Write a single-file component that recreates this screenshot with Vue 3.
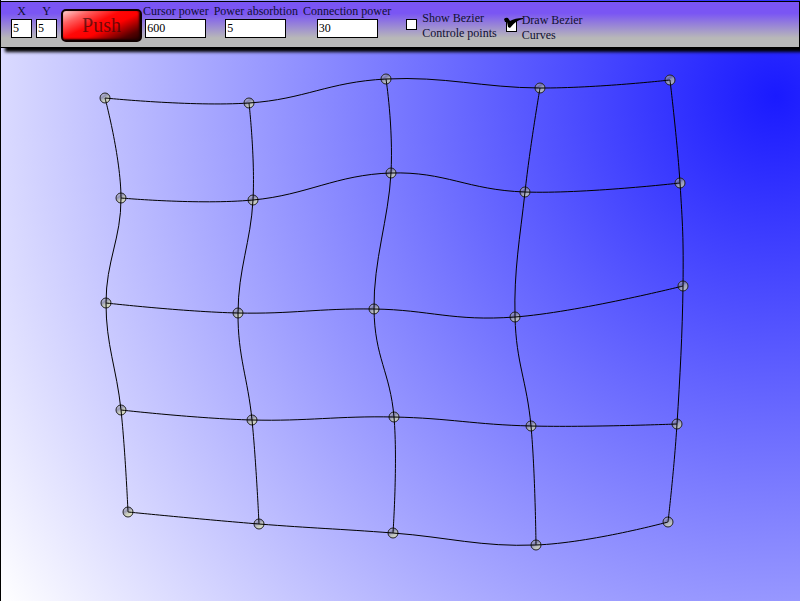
<script setup>
import { computed, ref } from 'vue'

const sizeX = ref('5')
const sizeY = ref('5')
const cursorPower = ref('600')
const absorption = ref('5')
const connectionPower = ref('30')
const showControls = ref(false)
const drawCurves = ref(true)

const nodes = [
  [[105, 98], [249, 103], [386, 79], [540, 88], [670, 80]],
  [[121, 198], [253, 200], [391, 173], [525, 192], [680, 183]],
  [[106, 303], [238, 313], [374, 309], [515, 317], [683, 286]],
  [[121, 410], [252, 420], [394, 417], [531, 426], [677, 424]],
  [[128, 512], [259, 524], [393, 533], [536, 545], [668, 522]],
]

const points = nodes.flat()
const columns = nodes[0].map((_, i) => nodes.map((row) => row[i]))
const tension = 0.2

// Control points on either side of a node follow the line between its neighbours.
function controls(line) {
  return line.slice(1).map((end, i) => {
    const start = line[i]
    const before = line[i - 1]
    const after = line[i + 2]
    const a = before
      ? [start[0] + (end[0] - before[0]) * tension, start[1] + (end[1] - before[1]) * tension]
      : start
    const b = after
      ? [end[0] - (after[0] - start[0]) * tension, end[1] - (after[1] - start[1]) * tension]
      : end
    return { a, b, end }
  })
}

function toPath(line) {
  const start = `M${line[0]}`
  if (!drawCurves.value) return start + line.slice(1).map((p) => `L${p}`).join('')
  return start + controls(line).map(({ a, b, end }) => `C${a} ${b} ${end}`).join('')
}

const lines = [...nodes, ...columns]
const paths = computed(() => lines.map(toPath))
const handles = computed(() =>
  showControls.value ? lines.flatMap((l) => controls(l).flatMap(({ a, b }) => [a, b])) : []
)
</script>

<template>
  <div class="app">
    <form class="toolbar" @submit.prevent>
      <div class="group">
        <label class="field tiny"><span>X</span><input v-model="sizeX" type="text" /></label>
        <label class="field tiny"><span>Y</span><input v-model="sizeY" type="text" /></label>
        <button class="push" type="submit"><span>Push</span></button>
      </div>
      <div class="group powers">
        <label class="field"><span>Cursor power</span><input v-model="cursorPower" type="text" /></label>
        <label class="field"><span>Power absorbtion</span><input v-model="absorption" type="text" /></label>
        <label class="field"><span>Connection power</span><input v-model="connectionPower" type="text" /></label>
      </div>
      <div class="group toggles">
        <label class="toggle">
          <span class="box">
            <input v-model="showControls" type="checkbox" />
            <svg v-if="showControls" class="tick" viewBox="0 0 20 14"><path d="M0 2 Q2 0 4 1 L6 4 Q11 1 19 1 L19 2 Q12 3 6 11 L4 10 L3 5 L1 5 Z" /></svg>
          </span>
          <span>Show Bezier<br />Controle points</span>
        </label>
        <label class="toggle second">
          <span class="box">
            <input v-model="drawCurves" type="checkbox" />
            <svg v-if="drawCurves" class="tick" viewBox="0 0 20 14"><path d="M0 2 Q2 0 4 1 L6 4 Q11 1 19 1 L19 2 Q12 3 6 11 L4 10 L3 5 L1 5 Z" /></svg>
          </span>
          <span>Draw Bezier<br />Curves</span>
        </label>
      </div>
    </form>
    <svg class="mesh">
      <defs>
        <linearGradient id="ball" x1="0" y1="0" x2="0.7" y2="1">
          <stop offset="0" stop-color="#ffffff" stop-opacity="0.6" />
          <stop offset="0.4" stop-color="#77778c" stop-opacity="0.65" />
          <stop offset="0.6" stop-color="#b8bca0" stop-opacity="0.7" />
          <stop offset="1" stop-color="#f0f8a8" stop-opacity="0.65" />
        </linearGradient>
      </defs>
      <circle v-for="(p, i) in points" :key="i" class="node" :cx="p[0]" :cy="p[1]" r="5" />
      <path v-for="(d, i) in paths" :key="i" class="line" :d="d" />
      <circle v-for="(p, i) in handles" :key="i" class="handle" :cx="p[0]" :cy="p[1]" r="2" />
    </svg>
  </div>
</template>

<style>
body {
  margin: 0;
}
</style>

<style scoped>
.app {
  box-sizing: border-box;
  display: grid;
  min-height: 100vh;
  grid-template-rows: auto 1fr;
  border-left: 1px solid #000;
  background: radial-gradient(circle farthest-corner at 97% 16%, #1a1aff, #fff);
  font: 12px/15px "Liberation Serif", serif;
  color: #101030;
}

.toolbar {
  z-index: 1;
  grid-area: 1 / 1;
  display: flex;
  align-items: flex-start;
  gap: 1px;
  height: 45px;
  margin-top: 1px;
  padding-left: 10px;
  border: 1px solid #000;
  border-left: 0;
  background: linear-gradient(#7a55f4 25%, #b8b8b8 80%);
  box-shadow: 4px 4px 3px #000;
}

.group {
  display: flex;
  gap: 4px;
}

.powers {
  gap: 5px;
}

.field {
  display: flex;
  flex-direction: column;
  align-items: center;
  padding-top: 2px;
}

.field input {
  box-sizing: border-box;
  width: 61px;
  height: 19px;
  padding: 0 1px;
  border: 1px solid #000;
  border-radius: 0;
  background: #fff;
  color: #000;
  font: inherit;
}

.tiny input {
  width: 21px;
}

.push {
  width: 81px;
  height: 33px;
  margin-top: 7px;
  padding: 0;
  border: 2px solid #100000;
  border-radius: 5px;
  background: linear-gradient(155deg, #ffd0d0, #ff6060 20%, #ff0808 42%, #f00 58%, #500 85%, #200);
  box-shadow: inset -1px -1px 2px #200;
  color: rgba(50, 10, 10, 0.7);
  font: 20px/29px "Liberation Serif", serif;
}

.toggles {
  gap: 9px;
  padding-left: 14px;
}

.toggle {
  display: flex;
  gap: 5px;
  padding-top: 9px;
}

.second {
  padding-top: 11px;
}

.box {
  position: relative;
  height: 11px;
  margin-top: 8px;
}

.box input {
  appearance: none;
  display: block;
  box-sizing: border-box;
  width: 11px;
  height: 11px;
  margin: 0;
  border: 1px solid #000;
  background: #fff;
}

.tick {
  position: absolute;
  left: -2px;
  top: -4px;
  width: 20px;
  height: 14px;
}

.mesh {
  grid-area: 1 / 1 / 3 / 2;
  width: 100%;
  height: 100%;
  margin-left: -1px;
}

.node {
  fill: url(#ball);
  stroke: #222;
}

.line {
  fill: none;
  stroke: #000;
}

.handle {
  fill: #f00;
}
</style>
